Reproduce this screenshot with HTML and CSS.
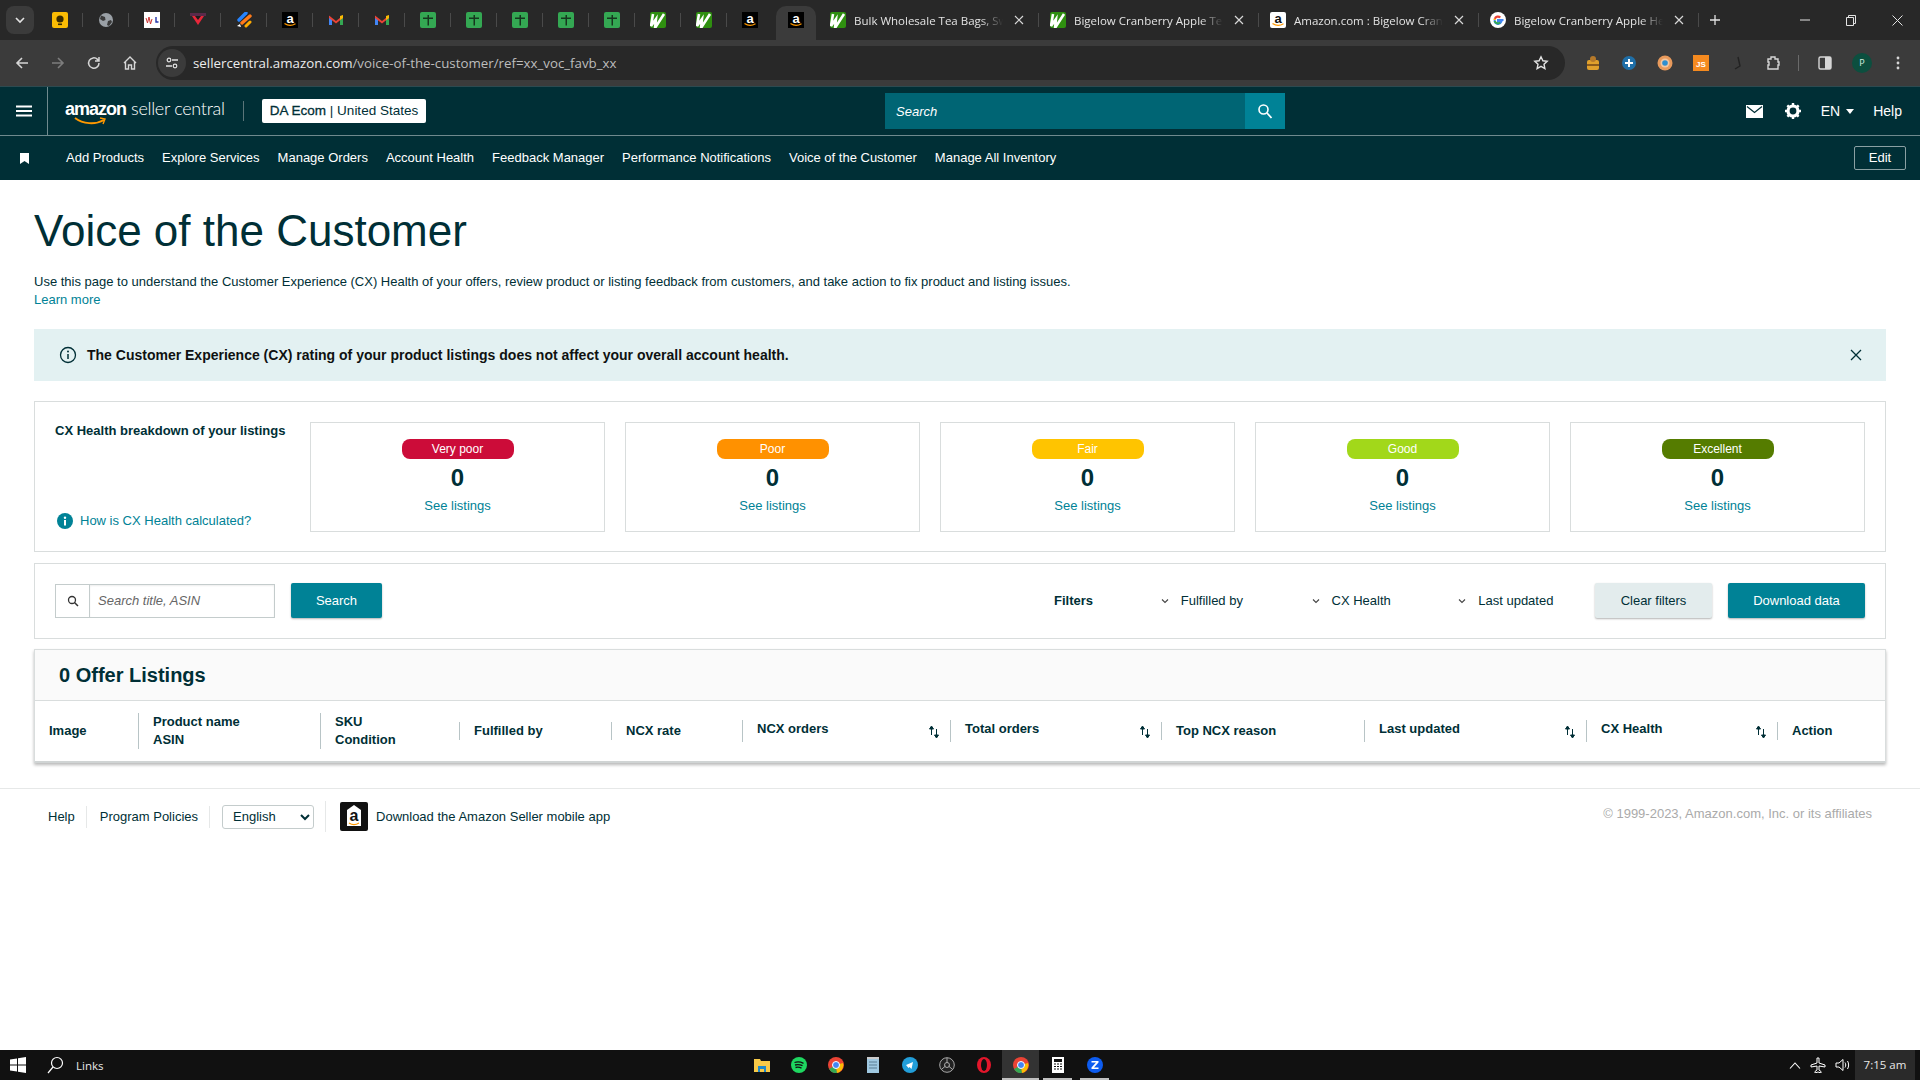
FILE: index.html
```html
<!DOCTYPE html>
<html lang="en">
<head>
<meta charset="utf-8">
<title>Voice of the Customer</title>
<link rel="stylesheet" href="styles.css">
</head>
<body>
<svg class="defs" width="0" height="0" aria-hidden="true">
  <symbol id="fav-keep" viewBox="0 0 16 16"><rect width="16" height="16" rx="2" fill="#fbbc04"/><circle cx="8" cy="7" r="3.6" fill="#3a2c00"/><rect x="6" y="11.5" width="4" height="1.6" fill="#3a2c00"/></symbol>
  <symbol id="fav-globe" viewBox="0 0 16 16"><circle cx="8" cy="8" r="7" fill="#9aa0a6"/><path d="M3 3.5 7 5 7.5 8 5 9 2 7zM10 9l3-1 1 2-3 4-2-1z" fill="#3a3a3a"/></symbol>
  <symbol id="fav-wl" viewBox="0 0 16 16"><rect width="16" height="16" fill="#fff"/><path d="M2 6l1.500 5 1.500-6 1.500 7 1.500-5" fill="none" stroke="#c33" stroke-width="1"/><path d="M12 5v5h2.500" fill="none" stroke="#23a" stroke-width="1.400"/></symbol>
  <symbol id="fav-tri" viewBox="0 0 16 16"><rect y="1" width="16" height="3" fill="#5a2a4a"/><path d="M2 4h12L8 13z" fill="#e8273a"/><path d="M5 4h6L8 8z" fill="#1b1b1b"/></symbol>
  <symbol id="fav-slash" viewBox="0 0 16 16"><path d="M3 8 10 1" stroke="#2684ff" stroke-width="3.400" stroke-linecap="round"/><path d="M6 11l8-7" stroke="#ff7a1a" stroke-width="3.400" stroke-linecap="round"/><path d="M1 14l3-2 1 3z" fill="#fff"/><path d="M10 14l4-4" stroke="#ffab00" stroke-width="3" stroke-linecap="round"/></symbol>
  <symbol id="fav-amz" viewBox="0 0 16 16"><rect width="16" height="16" fill="#000"/><path d="M2.500 11.500c3.500 2.400 7.500 2.400 11 .2" fill="none" stroke="#f90" stroke-width="1.200"/></symbol>
  <symbol id="fav-amz-w" viewBox="0 0 16 16"><rect width="16" height="16" rx="2" fill="#fff"/><path d="M2.500 11.500c3.500 2.400 7.500 2.400 11 .2" fill="none" stroke="#f90" stroke-width="1.200"/></symbol>
  <symbol id="fav-gmail" viewBox="0 0 16 16"><path d="M1 4v9h3V7z" fill="#4285f4"/><path d="M15 4v9h-3V7z" fill="#34a853"/><path d="M1 3.500 8 9l7-5.500V6L8 11.500 1 6z" fill="#ea4335"/><path d="M12 4l3-1v3l-3 2z" fill="#fbbc04"/></symbol>
  <symbol id="fav-sheet" viewBox="0 0 16 16"><rect width="16" height="16" rx="2" fill="#34a853"/><path d="M3 5.500h4.500V3H9v2.500h4V7H9v6.500H7.500V7H3z" fill="#16361f"/></symbol>
  <symbol id="fav-w" viewBox="0 0 16 16"><rect width="16" height="16" rx="2" fill="#2f8f10"/><path d="M3 2 1 14l5-7-1 9L14 2" fill="none" stroke="#fff" stroke-width="2.600"/></symbol>
  <symbol id="fav-g" viewBox="0 0 16 16"><circle cx="8" cy="8" r="8" fill="#fff"/><path d="M13.500 8H8v1.800h3.200A3.400 3.400 0 0 1 4.700 8" fill="none" stroke="#4285f4" stroke-width="2"/><path d="M4.600 8a3.400 3.400 0 0 1 .2-1.200" fill="none" stroke="#fbbc04" stroke-width="2.200"/><path d="M4.800 6.800A3.400 3.400 0 0 1 10.300 5.500" fill="none" stroke="#ea4335" stroke-width="2.200"/><path d="M4.700 9a3.400 3.400 0 0 0 5.500 1.500" fill="none" stroke="#34a853" stroke-width="2.200"/></symbol>
  <symbol id="sort" viewBox="0 0 12 16"><path d="M3.500 11V3M1.500 5 3.500 2l2 3z" fill="#002f36" stroke="#002f36"/><path d="M8.500 5v8M6.500 11l2 3 2-3z" fill="#002f36" stroke="#002f36"/></symbol>
  <symbol id="chev" viewBox="0 0 8 6"><path d="M1 1.500 4 4.500 7 1.500" fill="none" stroke="#444" stroke-width="1.100"/></symbol>
</svg>

<div class="strip">
  <div class="tabmenu"><svg width="12" height="8" viewBox="0 0 12 8"><path d="M2 2l4 4 4-4" fill="none" stroke="#e3e3e3" stroke-width="1.600"/></svg></div>
  <div class="pins">
    <div class="pin"><svg class="fav"><use href="#fav-keep"/></svg></div>
    <div class="pin"><svg class="fav"><use href="#fav-globe"/></svg></div>
    <div class="pin"><svg class="fav"><use href="#fav-wl"/></svg></div>
    <div class="pin"><svg class="fav"><use href="#fav-tri"/></svg></div>
    <div class="pin"><svg class="fav"><use href="#fav-slash"/></svg></div>
    <div class="pin"><svg class="fav" viewBox="0 0 16 16"><use href="#fav-amz"/><text x="8" y="10.500" text-anchor="middle" class="fav-a">a</text></svg></div>
    <div class="pin"><svg class="fav"><use href="#fav-gmail"/></svg></div>
    <div class="pin"><svg class="fav"><use href="#fav-gmail"/></svg></div>
    <div class="pin"><svg class="fav"><use href="#fav-sheet"/></svg></div>
    <div class="pin"><svg class="fav"><use href="#fav-sheet"/></svg></div>
    <div class="pin"><svg class="fav"><use href="#fav-sheet"/></svg></div>
    <div class="pin"><svg class="fav"><use href="#fav-sheet"/></svg></div>
    <div class="pin"><svg class="fav"><use href="#fav-sheet"/></svg></div>
    <div class="pin"><svg class="fav"><use href="#fav-w"/></svg></div>
    <div class="pin"><svg class="fav"><use href="#fav-w"/></svg></div>
    <div class="pin pin-last"><svg class="fav" viewBox="0 0 16 16"><use href="#fav-amz"/><text x="8" y="10.500" text-anchor="middle" class="fav-a">a</text></svg></div>
    <div class="pin pin-active"><svg class="fav" viewBox="0 0 16 16"><use href="#fav-amz"/><text x="8" y="10.500" text-anchor="middle" class="fav-a">a</text></svg></div>
  </div>
  <div class="tab"><svg class="fav"><use href="#fav-w"/></svg><span class="tab-title">Bulk Wholesale Tea Bags, Sweet</span><span class="tab-x"><svg width="10" height="10" viewBox="0 0 10 10"><path d="M1 1l8 8M9 1l-8 8" stroke="#d8d8d8" stroke-width="1.200"/></svg></span></div>
  <div class="tab"><svg class="fav"><use href="#fav-w"/></svg><span class="tab-title">Bigelow Cranberry Apple Tea Bags</span><span class="tab-x"><svg width="10" height="10" viewBox="0 0 10 10"><path d="M1 1l8 8M9 1l-8 8" stroke="#d8d8d8" stroke-width="1.200"/></svg></span></div>
  <div class="tab"><svg class="fav" viewBox="0 0 16 16"><use href="#fav-amz-w"/><text x="8" y="10.500" text-anchor="middle" class="fav-a fav-a-d">a</text></svg><span class="tab-title">Amazon.com : Bigelow Cranberry</span><span class="tab-x"><svg width="10" height="10" viewBox="0 0 10 10"><path d="M1 1l8 8M9 1l-8 8" stroke="#d8d8d8" stroke-width="1.200"/></svg></span></div>
  <div class="tab"><svg class="fav"><use href="#fav-g"/></svg><span class="tab-title">Bigelow Cranberry Apple Herbal</span><span class="tab-x"><svg width="10" height="10" viewBox="0 0 10 10"><path d="M1 1l8 8M9 1l-8 8" stroke="#d8d8d8" stroke-width="1.200"/></svg></span></div>
  <div class="newtab"><svg width="12" height="12" viewBox="0 0 12 12"><path d="M6 1v10M1 6h10" stroke="#e3e3e3" stroke-width="1.300"/></svg></div>
  <div class="winctl">
    <svg width="10" height="10" viewBox="0 0 10 10"><path d="M0 5h10" stroke="#e3e3e3"/></svg>
    <svg width="10" height="11" viewBox="0 0 10 11"><path d="M.5 2.500h7v8h-7zM2.500 2.500V.5h7v8H7.500" fill="none" stroke="#e3e3e3"/></svg>
    <svg width="11" height="11" viewBox="0 0 11 11"><path d="M.5.5l10 10M10.500.5l-10 10" stroke="#e3e3e3"/></svg>
  </div>
</div>

<div class="toolbar">
  <div class="navbtns">
    <svg width="16" height="16" viewBox="0 0 16 16"><path d="M14 8H3M8 3 3 8l5 5" fill="none" stroke="#d6d6d6" stroke-width="1.600"/></svg>
    <svg width="16" height="16" viewBox="0 0 16 16"><path d="M2 8h11M8 3l5 5-5 5" fill="none" stroke="#7d7d7d" stroke-width="1.600"/></svg>
    <svg width="16" height="16" viewBox="0 0 16 16"><path d="M13 8a5.200 5.200 0 1 1-1.500-3.600L13 6M13 2v4H9" fill="none" stroke="#d6d6d6" stroke-width="1.500"/></svg>
    <svg width="16" height="16" viewBox="0 0 16 16"><path d="M2 8l6-6 6 6M3.500 7v7h3v-4h3v4h3V7" fill="none" stroke="#d6d6d6" stroke-width="1.400"/></svg>
  </div>
  <div class="omnibox">
    <span class="site-chip"><svg width="14" height="14" viewBox="0 0 14 14"><circle cx="4" cy="4" r="1.800" fill="none" stroke="#e3e3e3" stroke-width="1.200"/><path d="M7 4h6M1 10h6" stroke="#e3e3e3" stroke-width="1.300"/><circle cx="10" cy="10" r="1.800" fill="none" stroke="#e3e3e3" stroke-width="1.200"/></svg></span>
    <span class="url"><span class="url-host">sellercentral.amazon.com</span>/voice-of-the-customer/ref=xx_voc_favb_xx</span>
    <svg class="star" width="16" height="16" viewBox="0 0 16 16"><path d="M8 1.800l1.900 4 4.300.5-3.200 3 .9 4.300L8 11.400l-3.900 2.200.9-4.300-3.200-3 4.300-.5z" fill="none" stroke="#e3e3e3" stroke-width="1.400"/></svg>
  </div>
  <div class="exts">
    <svg class="ext" viewBox="0 0 16 16"><rect x="2" y="5" width="12" height="10" rx="2" fill="#e0a02c"/><circle cx="8" cy="4" r="3" fill="#b5792a"/><rect x="2" y="9" width="12" height="2" fill="#8a5a1c"/></svg>
    <svg class="ext" viewBox="0 0 16 16"><circle cx="8" cy="8" r="7" fill="#1f6fa8"/><path d="M8 4v8M4 8h8" stroke="#fff" stroke-width="2"/></svg>
    <svg class="ext" viewBox="0 0 16 16"><circle cx="8" cy="8" r="7.500" fill="#e89a5c"/><circle cx="8" cy="8" r="4.500" fill="#f3c7a2"/><circle cx="8" cy="8" r="2.800" fill="#2f8fd0"/></svg>
    <svg class="ext" viewBox="0 0 16 16"><rect width="16" height="16" fill="#f58a1f"/><text x="8" y="12" text-anchor="middle" class="ext-js">JS</text></svg>
    <svg class="ext" viewBox="0 0 16 16"><path d="M9 2l2 9-5 3" fill="none" stroke="#222" stroke-width="1.400"/></svg>
    <svg class="ext" viewBox="0 0 16 16"><path d="M3 4h3V2h4v2h3v3h1v3h-1v4H3v-4h1V7H3z" fill="none" stroke="#d6d6d6" stroke-width="1.400"/></svg>
    <span class="tb-sep"></span>
    <svg class="ext" viewBox="0 0 16 16"><rect x="2" y="2" width="12" height="12" rx="1.500" fill="none" stroke="#d6d6d6" stroke-width="1.400"/><rect x="8" y="2" width="6" height="12" fill="#d6d6d6"/></svg>
    <span class="avatar">P</span>
    <svg class="ext" viewBox="0 0 16 16"><circle cx="8" cy="3" r="1.400" fill="#d6d6d6"/><circle cx="8" cy="8" r="1.400" fill="#d6d6d6"/><circle cx="8" cy="13" r="1.400" fill="#d6d6d6"/></svg>
  </div>
</div>

<header class="sc-top">
  <div class="burger"><svg width="16" height="12" viewBox="0 0 16 12"><path d="M0 1.500h16M0 6h16M0 10.500h16" stroke="#fff" stroke-width="1.800"/></svg></div>
  <div class="logo">
    <span class="logo-amazon">amazon</span><span class="logo-seller">seller central</span>
    <svg class="logo-smile" width="32" height="9" viewBox="0 0 32 9"><path d="M1 1c8 6 20 7 29 2" fill="none" stroke="#f90" stroke-width="2"/><path d="M26 1l5 1-2 5" fill="none" stroke="#f90" stroke-width="1.400"/></svg>
  </div>
  <span class="top-sep"></span>
  <div class="acct"><b class="acct-name">DA Ecom</b> | United States</div>
  <div class="top-search">
    <span class="top-search-text">Search</span>
    <span class="top-search-btn"><svg width="16" height="16" viewBox="0 0 16 16"><circle cx="6.500" cy="6.500" r="4.500" fill="none" stroke="#fff" stroke-width="1.600"/><path d="M10 10l4.500 5" stroke="#fff" stroke-width="1.800"/></svg></span>
  </div>
  <div class="top-right">
    <svg width="17" height="13" viewBox="0 0 17 13"><path fill="#fff" d="M0 0h17v13H0z"/><path d="M1 1.500l7.500 6 7.500-6" fill="none" stroke="#002f36" stroke-width="1.300"/></svg>
    <svg class="gear" width="18" height="18" viewBox="0 0 18 18"><circle cx="9" cy="9" r="5" fill="none" stroke="#fff" stroke-width="3.200"/><path d="M9 1v16M1 9h16M3.300 3.300l11.400 11.400M14.700 3.300 3.300 14.700" stroke="#fff" stroke-width="2.400" stroke-dasharray="3 10"/></svg>
    <span class="lang">EN<svg width="8" height="5" viewBox="0 0 8 5"><path d="M0 0h8L4 5z" fill="#fff"/></svg></span>
    <span class="help">Help</span>
  </div>
</header>

<nav class="sc-nav">
  <svg class="bookmark" width="9" height="11" viewBox="0 0 9 11"><path d="M0 0h9v11L4.500 8 0 11z" fill="#fff"/></svg>
  <a class="nav-item">Add Products</a>
  <a class="nav-item">Explore Services</a>
  <a class="nav-item">Manage Orders</a>
  <a class="nav-item">Account Health</a>
  <a class="nav-item">Feedback Manager</a>
  <a class="nav-item">Performance Notifications</a>
  <a class="nav-item">Voice of the Customer</a>
  <a class="nav-item">Manage All Inventory</a>
  <span class="edit-btn">Edit</span>
</nav>

<main class="page">
  <h1 class="title">Voice of the Customer</h1>
  <p class="intro">Use this page to understand the Customer Experience (CX) Health of your offers, review product or listing feedback from customers, and take action to fix product and listing issues.<br><a class="link">Learn more</a></p>

  <div class="banner">
    <svg width="18" height="18" viewBox="0 0 18 18"><circle cx="9" cy="9" r="7.500" fill="none" stroke="#002f36" stroke-width="1.300"/><path d="M9 8v5" stroke="#002f36" stroke-width="1.500"/><circle cx="9" cy="5.500" r="1" fill="#002f36"/></svg>
    <strong class="banner-text">The Customer Experience (CX) rating of your product listings does not affect your overall account health.</strong>
    <svg class="banner-x" width="12" height="12" viewBox="0 0 12 12"><path d="M1 1l10 10M11 1 1 11" stroke="#002f36" stroke-width="1.300"/></svg>
  </div>

  <section class="card health">
    <div class="health-left">
      <div class="health-title">CX Health breakdown of your listings</div>
      <a class="health-how"><svg width="16" height="16" viewBox="0 0 16 16"><circle cx="8" cy="8" r="8" fill="#008296"/><rect x="7" y="7" width="2" height="5.500" fill="#fff"/><circle cx="8" cy="4.700" r="1.200" fill="#fff"/></svg><span class="link">How is CX Health calculated?</span></a>
    </div>
    <div class="score"><span class="pill pill-vp">Very poor</span><span class="zero">0</span><a class="link">See listings</a></div>
    <div class="score"><span class="pill pill-p">Poor</span><span class="zero">0</span><a class="link">See listings</a></div>
    <div class="score"><span class="pill pill-f">Fair</span><span class="zero">0</span><a class="link">See listings</a></div>
    <div class="score"><span class="pill pill-g">Good</span><span class="zero">0</span><a class="link">See listings</a></div>
    <div class="score"><span class="pill pill-e">Excellent</span><span class="zero">0</span><a class="link">See listings</a></div>
  </section>

  <section class="card filters">
    <span class="s-icon"><svg width="12" height="12" viewBox="0 0 12 12"><circle cx="5" cy="5" r="3.500" fill="none" stroke="#333" stroke-width="1.300"/><path d="M7.500 7.500 11 11" stroke="#333" stroke-width="1.500"/></svg></span>
    <input class="s-input" type="text" placeholder="Search title, ASIN">
    <button class="btn btn-primary btn-search">Search</button>
    <b class="f-label">Filters</b>
    <span class="f-drop f-ful"><svg width="8" height="6"><use href="#chev"/></svg>Fulfilled by</span>
    <span class="f-drop f-cx"><svg width="8" height="6"><use href="#chev"/></svg>CX Health</span>
    <span class="f-drop f-last"><svg width="8" height="6"><use href="#chev"/></svg>Last updated</span>
    <button class="btn btn-clear">Clear filters</button>
    <button class="btn btn-primary btn-dl">Download data</button>
  </section>

  <section class="card listings">
    <h2 class="listings-head">0 Offer Listings</h2>
    <div class="thead">
      <div class="th th-first"><span class="th-in">Image</span></div>
      <div class="th"><span class="th-in th-in-2">Product name<br>ASIN</span></div>
      <div class="th"><span class="th-in th-in-2">SKU<br>Condition</span></div>
      <div class="th"><span class="th-in">Fulfilled by</span></div>
      <div class="th"><span class="th-in">NCX rate</span></div>
      <div class="th"><span class="th-in th-in-s"><span class="th-label">NCX orders</span><svg class="sort"><use href="#sort"/></svg></span></div>
      <div class="th"><span class="th-in th-in-s"><span class="th-label">Total orders</span><svg class="sort"><use href="#sort"/></svg></span></div>
      <div class="th"><span class="th-in">Top NCX reason</span></div>
      <div class="th"><span class="th-in th-in-s"><span class="th-label">Last updated</span><svg class="sort"><use href="#sort"/></svg></span></div>
      <div class="th"><span class="th-in th-in-s"><span class="th-label">CX Health</span><svg class="sort"><use href="#sort"/></svg></span></div>
      <div class="th"><span class="th-in">Action</span></div>
    </div>
  </section>
</main>

<footer class="foot">
  <a class="foot-link foot-help">Help</a>
  <a class="foot-link foot-pol">Program Policies</a>
  <select class="foot-lang"><option>English</option></select>
  <span class="foot-app">
    <svg width="30" height="31" viewBox="0 0 30 31"><path d="M3 1h24q2 0 2 2v25q0 2-2 2H3q-2 0-2-2V3q0-2 2-2z" fill="#111"/><path d="M15 4l7 5v16H8V9z" fill="#fff"/><text x="15" y="20" text-anchor="middle" class="foot-a">a</text><path d="M10 22c3 2 7 2 10 0" fill="none" stroke="#f90" stroke-width="1.200"/></svg>
    Download the Amazon Seller mobile app
  </span>
  <span class="copy">© 1999-2023, Amazon.com, Inc. or its affiliates</span>
</footer>

<div class="taskbar">
  <svg class="win" width="16" height="16" viewBox="0 0 16 16"><path d="M0 2.500 7 1.500V7.500H0zM8 1.300 16 0v7.500H8zM0 8.500h7v6l-7-1zM8 8.500h8V16l-8-1.300z" fill="#fff"/></svg>
  <svg class="tb-search" width="18" height="18" viewBox="0 0 18 18"><circle cx="11" cy="7" r="5.500" fill="none" stroke="#fff" stroke-width="1.200"/><path d="M7 11l-5 6" stroke="#fff" stroke-width="1.200"/></svg>
  <span class="tb-links">Links</span>
  <div class="tb-apps">
    <span class="app"><svg class="appi" viewBox="0 0 16 16"><path d="M0 2h6l1 2h9v11H0z" fill="#f7c948"/><path d="M4 9h8v6h-2v-3H6v3H4z" fill="#1e88c9"/></svg></span>
    <span class="app"><svg class="appi" viewBox="0 0 16 16"><circle cx="8" cy="8" r="8" fill="#1ed760"/><path d="M3.500 5.500c3-1 6-.7 9 .8M4 8c2.500-.7 5-.5 7.500.7M4.500 10.500c2-.5 4-.4 6 .6" fill="none" stroke="#111" stroke-width="1.300"/></svg></span>
    <span class="app"><svg class="appi" viewBox="0 0 16 16"><circle cx="8" cy="8" r="8" fill="#ea4335"/><path d="M8 8 1 12a8 8 0 0 0 8 4z" fill="#34a853"/><path d="M8 8l7-2a8 8 0 0 1-6 10z" fill="#fbbc04"/><circle cx="8" cy="8" r="3.500" fill="#4285f4" stroke="#fff"/></svg></span>
    <span class="app"><svg class="appi" viewBox="0 0 16 16"><path d="M2 1h12v15H2z" fill="#9fc8e0"/><path d="M4 5h8M4 8h8M4 11h8" stroke="#5a7f95"/><path d="M2 0h12v2H2z" fill="#ccc"/></svg></span>
    <span class="app"><svg class="appi" viewBox="0 0 16 16"><circle cx="8" cy="8" r="8" fill="#229ed9"/><path d="M4 8l7-3-1.500 7-2-2-1 1z" fill="#fff"/></svg></span>
    <span class="app"><svg class="appi" viewBox="0 0 16 16"><circle cx="8" cy="8" r="7.300" fill="#222" stroke="#aaa"/><circle cx="8" cy="8" r="2.500" fill="none" stroke="#aaa"/><path d="M8 1v5M3 12l3.500-3M13 12 9.500 9" stroke="#aaa"/></svg></span>
    <span class="app"><svg class="appi" viewBox="0 0 16 16"><ellipse cx="8" cy="8" rx="7" ry="8" fill="#e3162b"/><ellipse cx="8" cy="8" rx="3" ry="6" fill="#111"/></svg></span>
    <span class="app app-on"><svg class="appi" viewBox="0 0 16 16"><circle cx="8" cy="8" r="8" fill="#ea4335"/><path d="M8 8 1 12a8 8 0 0 0 8 4z" fill="#34a853"/><path d="M8 8l7-2a8 8 0 0 1-6 10z" fill="#fbbc04"/><circle cx="8" cy="8" r="3.500" fill="#4285f4" stroke="#fff"/></svg></span>
    <span class="app app-open"><svg class="appi" viewBox="0 0 16 16"><path d="M2 0h12v16H2z" fill="#fff"/><path d="M4 2h8v3H4z" fill="#111"/><path d="M4 7h2M7 7h2M10 7h2M4 9.500h2M7 9.500h2M10 9.500h2M4 12h2M7 12h2M10 12h2" stroke="#111"/></svg></span>
    <span class="app app-open"><svg class="appi" viewBox="0 0 16 16"><circle cx="8" cy="8" r="8" fill="#0d5cf0"/><path d="M4.500 4h7v1.500L7 10.500h4.500V12h-7v-1.500L9 5.500H4.500z" fill="#fff"/></svg></span>
  </div>
  <div class="tray">
    <svg width="12" height="7" viewBox="0 0 12 7"><path d="M1 6.500 6 1l5 5.500" fill="none" stroke="#fff" stroke-width="1.100"/></svg>
    <svg width="16" height="16" viewBox="0 0 16 16"><path d="M7 1h2v5l6 2v2l-6-1v4l2 1.500V16l-3-1-3 1v-1.500L7 13V9l-6 1V8l6-2z" fill="none" stroke="#fff"/></svg>
    <svg width="16" height="14" viewBox="0 0 16 14"><path d="M1 5h3l4-3.500v11L4 9H1z" fill="none" stroke="#fff"/><path d="M10 4.500c1 1.500 1 3.500 0 5M12.500 3c1.500 2.500 1.500 5.500 0 8" fill="none" stroke="#fff"/></svg>
    <span class="clock">7:15 am</span>
  </div>
</div>
</body>
</html>
```
FILE: styles.css
```css
* { box-sizing: border-box; }
html, body { margin: 0; height: 1080px; overflow: hidden; }
body { display: flex; flex-direction: column; background: #fff; color: #002f36; font: 13px/18px "Liberation Sans", Arial, sans-serif; }
.defs { position: absolute; }
a { cursor: pointer; }
.link { color: #008296; }

.strip { height: 40px; background: #282828; display: flex; align-items: center; color: #e3e3e3; font: 11.5px "Open Sans", sans-serif; flex: none; }
.tabmenu { width: 28px; height: 28px; margin-left: 6px; border-radius: 8px; background: #3b3b3b; display: flex; align-items: center; justify-content: center; align-self: flex-start; margin-top: 6px; }
.pins { display: flex; margin-left: 3px; height: 40px; }
.pin { width: 46px; height: 40px; display: flex; align-items: center; justify-content: center; position: relative; }
.pin::after { content: ""; position: absolute; right: 0; top: 13px; height: 14px; width: 1px; background: #4a4a4a; }
.pin-last::after, .pin-active::after { display: none; }
.pin-active { background: #3b3b3b; border-radius: 10px 10px 0 0; margin: 6px 3px 0; width: 40px; height: 34px; padding-bottom: 6px; }
.fav { width: 16px; height: 16px; flex: none; display: block; }
.fav-a { font: bold 13px "Liberation Sans", sans-serif; fill: #fff; }
.fav-a-d { fill: #111; }
.ext-js { font: bold 8px "Liberation Sans", sans-serif; fill: #fff; }
.tab { width: 220px; height: 40px; display: flex; align-items: center; padding: 0 12px 0 11px; position: relative; gap: 8px; flex: none; }
.tab::after { content: ""; position: absolute; right: 0; top: 13px; height: 14px; width: 1px; background: #4a4a4a; }
.tab-title { width: 153px; white-space: nowrap; overflow: hidden; -webkit-mask-image: linear-gradient(90deg, #000 85%, transparent); mask-image: linear-gradient(90deg, #000 85%, transparent); }
.tab-x { width: 16px; display: flex; justify-content: center; }
.newtab { margin-left: 10px; display: flex; }
.winctl { margin-left: auto; display: flex; gap: 36px; padding-right: 17px; align-items: center; }

.toolbar { height: 47px; background: #3b3b3b; border-bottom: 1px solid #2c4a50; display: flex; align-items: center; flex: none; color: #e3e3e3; }
.navbtns { display: flex; gap: 20px; margin-left: 14px; width: 142px; }
.omnibox { width: 1409px; height: 34px; background: #282828; border-radius: 17px; display: flex; align-items: center; padding: 0 16px 0 2px; }
.site-chip { width: 28px; height: 28px; border-radius: 50%; background: #3b3b3b; display: flex; align-items: center; justify-content: center; }
.url { margin-left: 7px; font: 13.3px "Open Sans", sans-serif; color: #bdbdbd; }
.url-host { color: #ececec; }
.star { margin-left: auto; }
.exts { display: flex; align-items: center; margin-left: 20px; gap: 20px; }
.ext { width: 16px; height: 16px; flex: none; }
.tb-sep { width: 1px; height: 16px; background: #6a6a6a; margin: 0 -2px 0 -3px; }
.avatar { width: 20px; height: 20px; border-radius: 50%; background: #0c4f3f; color: #d8f0e0; font: 9px/20px "Open Sans", sans-serif; text-align: center; margin: 0 -2px 0 -1px; }

.sc-top { height: 49px; flex: none; background: #002f36; border-bottom: 1px solid #6f8a8e; display: flex; align-items: center; color: #fff; position: relative; }
.burger { width: 48px; height: 48px; border-right: 1px solid #6f8a8e; display: flex; align-items: center; justify-content: center; flex: none; }
.logo { position: relative; margin-left: 17px; width: 178px; display: flex; align-items: baseline; height: 30px; line-height: 24px; white-space: nowrap; }
.logo-amazon { font: bold 18px/24px "Liberation Sans", sans-serif; letter-spacing: -1px; }
.logo-seller { font: 300 18px/24px Lato, sans-serif; margin-left: 5px; letter-spacing: -.3px; }
.logo-smile { position: absolute; left: 9px; top: 21px; }
.top-sep { width: 1px; height: 20px; background: #5b7579; flex: none; }
.acct { margin-left: 18px; width: 164px; height: 24px; background: #fff; color: #002f36; border-radius: 2px; font-size: 13.5px; line-height: 24px; text-align: center; white-space: nowrap; flex: none; }
.acct-name { font-weight: 400; -webkit-text-stroke: .3px #002f36; }
.top-search { margin-left: 459px; width: 400px; height: 36px; background: #006574; display: flex; align-items: center; flex: none; }
.top-search-text { flex: 1; padding: 1px 0 0 11px; font-style: italic; font-size: 13px; color: #fff; }
.top-search-btn { width: 40px; height: 36px; background: #008296; display: flex; align-items: center; justify-content: center; }
.top-right { margin-left: auto; display: flex; align-items: center; padding-right: 18px; }
.gear { margin-left: 21px; }
.lang { margin-left: 19px; display: flex; align-items: center; gap: 6px; font-size: 14px; }
.help { margin-left: 19px; font-size: 14px; }

.sc-nav { height: 44px; flex: none; background: #002f36; display: flex; align-items: center; color: #fff; padding-left: 20px; position: relative; }
.bookmark { margin-right: 37px; }
.nav-item { margin-right: 18px; white-space: nowrap; font-size: 13px; }
.edit-btn { margin-left: auto; margin-right: 14px; width: 52px; height: 24px; border: 1px solid #8aa0a3; border-radius: 2px; text-align: center; line-height: 22px; font-size: 13px; }

.page { padding: 0 34px; flex: none; height: 608px; }
.title { margin: 23px 0 0; font: 400 44px/56px "Liberation Sans", sans-serif; color: #002f36; }
.intro { margin: 14px 0 20px; font-size: 13px; line-height: 18px; }
.banner { height: 52px; background: #e3f1f2; display: flex; align-items: center; padding: 0 24px 1px 25px; font-size: 14px; }
.banner-text { margin-left: 10px; font-size: 14px; font-weight: 700; color: #0f1111; }
.banner-x { margin-left: auto; }

.card { border: 1px solid #d9dddd; background: #fff; }
.health { margin-top: 20px; height: 151px; padding: 20px 20px 19px; display: flex; gap: 20px; }
.health-left { width: 235px; flex: none; display: flex; flex-direction: column; justify-content: space-between; padding-bottom: 2px; }
.health-title { font-weight: 700; font-size: 13px; white-space: nowrap; }
.health-how { display: flex; align-items: center; gap: 7px; padding-left: 2px; font-size: 13px; white-space: nowrap; }
.score { width: 295px; height: 110px; border: 1px solid #d9dddd; flex: none; display: flex; flex-direction: column; align-items: center; padding-top: 16px; font-size: 13px; }
.pill { width: 112px; height: 20px; border-radius: 8px; color: #fff; text-align: center; line-height: 20px; font-size: 12px; }
.pill-vp { background: #cc0c39; }
.pill-p { background: #ff9100; }
.pill-f { background: #ffc400; }
.pill-g { background: #a2d81a; }
.pill-e { background: #557c00; }
.zero { font-size: 24px; line-height: 30px; font-weight: 700; margin: 4px 0 4px; }

.filters { margin-top: 11px; height: 76px; display: flex; align-items: center; padding: 0 20px 1px; position: relative; }
.s-icon { width: 34px; height: 34px; border: 1px solid #c4cccc; border-right: 0; display: flex; align-items: center; justify-content: center; flex: none; }
.s-input { width: 186px; height: 34px; border: 1px solid #c4cccc; padding: 0 8px; font: italic 13px "Liberation Sans", sans-serif; box-shadow: inset 0 1px 2px #eee; flex: none; }
.s-input::placeholder { color: #666; }
.btn { height: 35px; border: 0; border-radius: 2px; font: 13px "Liberation Sans", sans-serif; box-shadow: 0 1px 2px rgba(0,0,0,.3); padding: 0; flex: none; }
.btn-primary { background: #008296; color: #fff; }
.btn-search { width: 91px; margin-left: 16px; }
.btn-clear { width: 117px; background: #e3eced; color: #002f36; }
.btn-dl { width: 137px; margin-left: 16px; }
.f-label { margin-left: 672px; width: 107px; font-size: 13px; }
.f-drop { display: flex; align-items: center; gap: 12px; font-size: 13px; white-space: nowrap; color: #002f36; }
.f-drop svg { flex: none; }
.f-ful { width: 151px; }
.f-cx { width: 147px; }
.f-last { width: 137px; }

.listings { margin-top: 10px; height: 114px; box-shadow: 0 2px 3px rgba(0,0,0,.28); border-bottom: 2px solid #d0d4d4; }
.listings-head { margin: 0; height: 51px; background: #fafafa; border-bottom: 1px solid #d9dddd; font: 700 20px/50px "Liberation Sans", sans-serif; padding-left: 24px; }
.thead { display: grid; grid-template-columns: 103px 182px 139px 152px 131px 208px 211px 203px 222px 191px 108px; height: 59px; align-items: center; font-size: 13px; font-weight: 700; }
.th-in { display: block; border-left: 1px solid #b8c4c6; padding-left: 14px; line-height: 18px; white-space: nowrap; }
.th-first .th-in { border-left: 0; }
.th-in-s { display: flex; justify-content: space-between; align-items: flex-start; height: 22px; padding-right: 10px; }
.th-label { line-height: 18px; }
.sort { width: 12px; height: 16px; margin-top: 4px; }

.foot { height: 61px; flex: none; border-top: 1px solid #e6e8e8; display: flex; align-items: center; padding: 0 0 5px 48px; position: relative; font-size: 13px; }
.foot-link { line-height: 22px; }
.foot-help { padding-right: 11px; border-right: 1px solid #e6e8e8; }
.foot-pol { padding: 0 11px 0 13px; border-right: 1px solid #e6e8e8; }
.foot-lang { margin-left: 12px; width: 92px; height: 24px; border: 1px solid #c4cccc; border-radius: 3px; background: #fff; font: 13px "Liberation Sans", sans-serif; padding-left: 6px; color: #002f36; }
.foot-app { margin-left: 11px; padding-left: 13px; border-left: 1px solid #e6e8e8; display: flex; align-items: center; gap: 7px; white-space: nowrap; }
.foot-a { font: bold 16px "Liberation Sans", sans-serif; fill: #111; }
.copy { position: absolute; right: 48px; top: 16px; color: #aaa; }

.taskbar { margin-top: auto; height: 30px; background: #111; display: flex; align-items: center; color: #e8e8e8; flex: none; position: relative; }
.win { margin-left: 10px; }
.tb-search { margin-left: 20px; }
.tb-links { margin-left: 12px; font: 11.5px "Open Sans", sans-serif; }
.tb-apps { display: flex; position: absolute; left: 743px; top: 0; height: 30px; }
.app { width: 37px; height: 30px; display: flex; align-items: center; justify-content: center; position: relative; }
.appi { width: 16px; height: 16px; }
.app-on { background: #333; }
.app-on::after, .app-open::after { content: ""; position: absolute; bottom: 0; left: 4px; right: 4px; height: 2px; background: #c0c0c0; }
.app-on::after { left: 0; right: 0; }
.tray { margin-left: auto; display: flex; align-items: center; gap: 9px; height: 30px; padding-right: 5px; }
.clock { margin-left: -5px; width: 60px; height: 30px; background: #2a2a2a; text-align: center; font: 11.5px/30px "Open Sans", sans-serif; }
```
